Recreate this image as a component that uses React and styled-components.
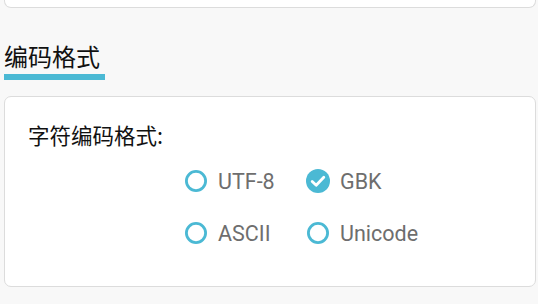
import React, { useState } from 'react';
import styled, { createGlobalStyle } from 'styled-components';

const GlobalStyle = createGlobalStyle`
    html, body {
        margin: 0;
        padding: 0;
        background: #f8f8f8;
    }
    body {
        font-family: Roboto, "Noto Sans CJK SC", sans-serif;
    }
`

const options = ['UTF-8', 'GBK', 'ASCII', 'Unicode'];

const Mark = ({ checked }) => (
    checked ? (
        <svg width="24" height="24" viewBox="0 0 24 24">
            <circle cx="12" cy="12" r="12" fill="#4bb9d4" />
            <path d="M6.2 12.4 L10.2 16.2 L17.8 8.2" fill="none" stroke="#fff" strokeWidth="2.8" strokeLinecap="round" strokeLinejoin="round" />
        </svg>
    ) : (
        <svg width="24" height="24" viewBox="0 0 24 24">
            <circle cx="12" cy="12" r="9.6" fill="none" stroke="#4bb9d4" strokeWidth="2.8" />
        </svg>
    )
)

const App = () => {
    const [value, setValue] = useState('GBK');

    return (
        <Page>
            <GlobalStyle />
            <TopCard />
            <SectionTitle>编码格式</SectionTitle>
            <Card>
                <Label>字符编码格式:</Label>
                <Options>
                    {options.map((opt) => (
                        <Option key={opt} onClick={() => setValue(opt)}>
                            <Mark checked={value === opt} />
                            <OptionText>{opt}</OptionText>
                        </Option>
                    ))}
                </Options>
            </Card>
        </Page>
    )
}

const Page = styled.div`
    min-height: 304px;
    padding: 0 2px 0 4px;
    box-sizing: border-box;
    background: #f8f8f8;
    overflow: hidden;
`
const TopCard = styled.div`
    height: 7px;
    background: #fff;
    border: 1px solid #dcdcdc;
    border-top: none;
    border-radius: 0 0 7px 7px;
`
const SectionTitle = styled.h2`
    display: inline-block;
    margin: 33px 0 0 0;
    padding: 0 5px 3px 0;
    font-family: "Noto Sans CJK SC", sans-serif;
    font-size: 24px;
    line-height: 30px;
    font-weight: normal;
    color: #111;
    border-bottom: 6px solid #4bb9d4;
`
const Card = styled.div`
    margin-top: 16px;
    height: 191px;
    box-sizing: border-box;
    padding: 23px 23px 0 23px;
    background: #fff;
    border: 1px solid #dcdcdc;
    border-radius: 7px;
`
const Label = styled.div`
    font-family: "Noto Sans CJK SC", sans-serif;
    font-size: 21.5px;
    line-height: 30px;
    color: #111;
`
const Options = styled.div`
    display: grid;
    grid-template-columns: 122px 122px;
    grid-auto-rows: 30px;
    row-gap: 22px;
    margin: 16px 0 0 156px;
`
const Option = styled.label`
    display: flex;
    align-items: center;
    gap: 10px;
    cursor: pointer;
`
const OptionText = styled.span`
    font-family: Roboto, sans-serif;
    font-size: 21.5px;
    color: #6e6e6e;
`
export default App
